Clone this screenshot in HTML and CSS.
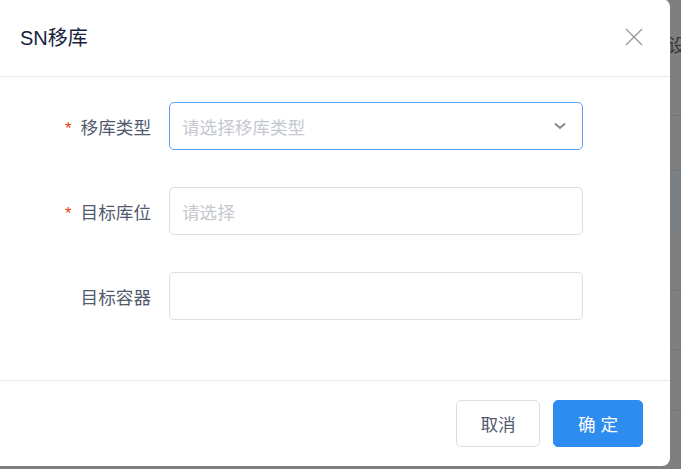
FILE: index.html
```html
<!DOCTYPE html>
<html lang="zh">
<head>
<meta charset="utf-8">
<title>SN移库</title>
<link rel="stylesheet" href="styles.css">
</head>
<body>
<div class="page">
  <div class="page-row page-head"><span class="page-text">设置</span></div>
  <div class="page-row r1"></div>
  <div class="page-row r2 band"></div>
  <div class="page-row r3"></div>
  <div class="page-row r4"></div>
  <div class="page-row r5"></div>
  <div class="page-row r6"></div>
</div>

<div class="dialog">
  <div class="dialog-header">
    <span class="dialog-title">SN移库</span>
    <span class="close">
      <svg width="18" height="18" viewBox="0 0 18 18"><path d="M1 1 L17 17 M17 1 L1 17" stroke="#999999" stroke-width="1.4" fill="none"/></svg>
    </span>
  </div>
  <div class="dialog-body">
    <div class="form-row">
      <label class="form-label"><span class="req">*</span>移库类型</label>
      <div class="input focus">
        <span class="placeholder">请选择移库类型</span>
        <svg class="chev" width="12" height="8" viewBox="0 0 12 8"><path d="M1 1.5 L6 6 L11 1.5" stroke="#808695" stroke-width="1.8" fill="none"/></svg>
      </div>
    </div>
    <div class="form-row">
      <label class="form-label"><span class="req">*</span>目标库位</label>
      <div class="input"><span class="placeholder">请选择</span></div>
    </div>
    <div class="form-row">
      <label class="form-label">目标容器</label>
      <div class="input"></div>
    </div>
  </div>
  <div class="dialog-footer">
    <button class="btn btn-default">取消</button>
    <button class="btn btn-primary">确 定</button>
  </div>
</div>
</body>
</html>
```

FILE: styles.css
```css
* { box-sizing: border-box; }
html, body {
  margin: 0;
  padding: 0;
  width: 681px;
  height: 469px;
  overflow: hidden;
  background: #7f7f7f;
  font-family: "Liberation Sans", "Noto Sans CJK SC", sans-serif;
}
.page {
  display: flex;
  flex-direction: column;
  padding-left: 668px;
}
.page-row {
  border-bottom: 1px solid #757575;
  white-space: nowrap;
  overflow: hidden;
}
.page-head { height: 116px; padding-top: 31px; }
.page-text { font-size: 18px; color: #333; }
.r1 { height: 55px; }
.band { height: 60px; background: #7a8083; border-bottom: none; }
.r3 { height: 60px; }
.r4 { height: 59px; }
.r5 { height: 61px; }
.r6 { height: 60px; border-bottom: none; }

.dialog {
  position: absolute;
  left: -8px;
  top: -1px;
  width: 678px;
  height: 467px;
  background: #fff;
  border-radius: 8px;
  display: flex;
  flex-direction: column;
}
.dialog-header {
  height: 78px;
  border-bottom: 1px solid #e8eaec;
  display: flex;
  align-items: center;
  justify-content: space-between;
  padding: 0 27px 2px 28px;
}
.dialog-title {
  font-size: 20px;
  color: #17233d;
}
.close { display: flex; width: 18px; height: 18px; }

.dialog-body {
  flex: 1;
  padding-top: 25px;
  display: flex;
  flex-direction: column;
  gap: 37px;
}
.form-row {
  display: flex;
  align-items: center;
  height: 48px;
}
.form-label {
  width: 160px;
  text-align: right;
  font-size: 17.6px;
  color: #515a6e;
  padding-right: 1px;
}
.req {
  color: #ed4014;
  margin-right: 9px;
  font-size: 17px;
}
.input {
  margin-left: 17px;
  width: 414px;
  height: 48px;
  border: 1px solid #dcdee2;
  border-radius: 5px;
  display: flex;
  align-items: center;
  padding: 0 16px 0 12px;
  justify-content: space-between;
}
.input.focus { border-color: #57a3f3; }
.placeholder {
  font-size: 17.6px;
  color: #c5c8ce;
}
.chev { display: block; }

.dialog-footer {
  height: 86px;
  border-top: 1px solid #e8eaec;
  display: flex;
  justify-content: flex-end;
  align-items: flex-start;
  gap: 13px;
  padding: 19px 27px 0 0;
}
.btn {
  height: 47px;
  border-radius: 5px;
  font-size: 17.6px;
  font-family: "Liberation Sans", "Noto Sans CJK SC", sans-serif;
  cursor: pointer;
}
.btn-default {
  width: 84px;
  background: #fff;
  border: 1px solid #dcdee2;
  color: #515a6e;
}
.btn-primary {
  width: 90px;
  background: #2d8cf0;
  border: 1px solid #2d8cf0;
  color: #fff;
}
```
